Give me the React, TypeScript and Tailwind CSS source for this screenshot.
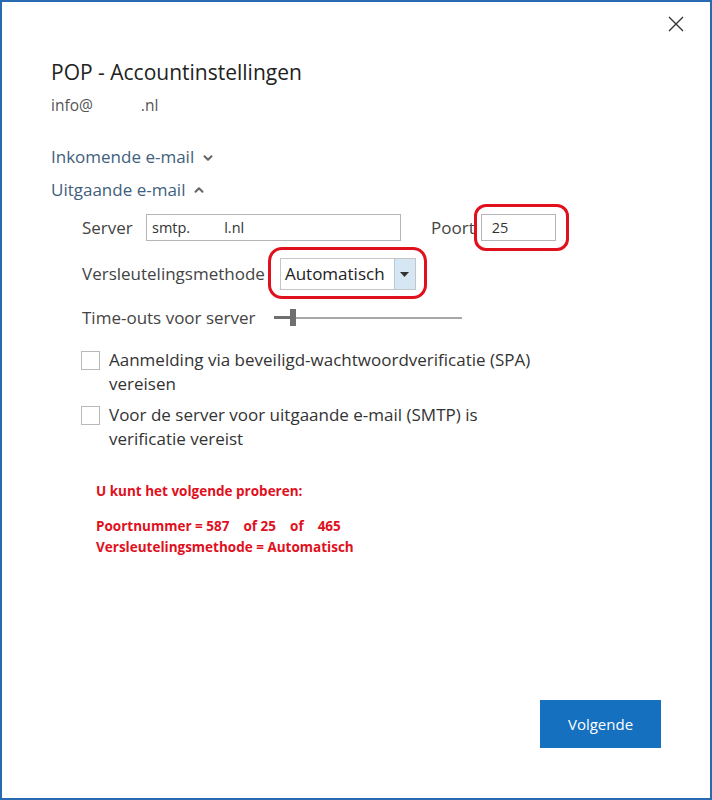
import { ChevronDown, ChevronUp } from "lucide-react";

const font = { fontFamily: '"Segoe UI", "Open Sans", "Noto Sans", sans-serif' };

function Checkbox({ lines }: { lines: string[] }) {
  return (
    <div className="flex items-start gap-[9px]">
      <div className="mt-[3px] h-[19px] w-[19px] shrink-0 border border-[#b9b9b9] bg-white" />
      <div className="text-[17px] leading-[24px] text-[#333]">
        {lines.map((l) => (
          <div key={l}>{l}</div>
        ))}
      </div>
    </div>
  );
}

export default function App() {
  return (
    <div
      style={font}
      className="relative flex h-[800px] w-[712px] flex-col border-2 border-[#2a6ab1] bg-white"
    >
      {/* close */}
      <div className="flex justify-end pr-[26px] pt-[14px]">
        <svg width="16" height="16" viewBox="0 0 16 16" stroke="#333" strokeWidth="1.4">
          <path d="M1 1 L15 15 M15 1 L1 15" />
        </svg>
      </div>

      <div className="pl-[49px] pt-[26px]">
        <h1 className="text-[21px] leading-[28px] text-[#222]">POP - Accountinstellingen</h1>
        <div className="mt-[9px] text-[15.5px] leading-[20px] text-[#555]">
          info@<span className="inline-block w-[48px]" />.nl
        </div>

        <div className="mt-[31px] flex items-center gap-[7px] text-[17px] leading-[22px] text-[#41607c]">
          Inkomende e-mail
          <ChevronDown size={14} strokeWidth={3.5} className="mt-[2px] text-[#666]" />
        </div>
        <div className="mt-[11px] flex items-center gap-[7px] text-[17px] leading-[22px] text-[#41607c]">
          Uitgaande e-mail
          <ChevronUp size={14} strokeWidth={3.5} className="text-[#666]" />
        </div>

        <div className="pl-[31px] text-[#444]">
          {/* server row */}
          <div className="mt-[13px] flex items-center">
            <span className="w-[64px] text-[17px]">Server</span>
            <div className="flex h-[27px] w-[255px] items-center border border-[#b5b5b5] px-[5px] text-[14.5px] text-[#333]">
              smtp.<span className="inline-block w-[34px]" />l.nl
            </div>
            <span className="ml-[30px] text-[17px]">Poort</span>
            <div className="relative ml-[6px]">
              <div className="flex h-[27px] w-[75px] items-center border border-[#b5b5b5] px-[10px] text-[14.5px] text-[#333]">
                25
              </div>
              <div className="absolute left-[-7px] top-[-10px] h-[47px] w-[95px] rounded-[12px] border-[3px] border-[#e0101d]" />
            </div>
          </div>

          {/* encryption row */}
          <div className="mt-[17px] flex items-center">
            <span className="text-[17px]">Versleutelingsmethode</span>
            <div className="relative ml-[15px]">
              <div className="flex h-[32px] w-[136px] items-stretch border border-[#c5c5c5] bg-white">
                <div className="flex flex-1 items-center pl-[4px] text-[17px] text-[#222]">Automatisch</div>
                <div className="flex w-[21px] items-center justify-center border-l border-[#b0cbe3] bg-[#d7e6f3]">
                  <svg width="9" height="5" viewBox="0 0 9 5">
                    <path d="M0 0 H9 L4.5 5 Z" fill="#333" />
                  </svg>
                </div>
              </div>
              <div className="absolute left-[-12px] top-[-11px] h-[52px] w-[159px] rounded-[14px] border-[3px] border-[#e0101d]" />
            </div>
          </div>

          {/* slider */}
          <div className="mt-[16px] flex h-[23px] items-center">
            <span className="text-[17px]">Time-outs voor server</span>
            <div className="relative ml-[18px] flex h-[17px] w-[188px] items-center">
              <div className="h-[3px] w-[16px] bg-[#6f6f6f]" />
              <div className="h-[17px] w-[6px] bg-[#6f6f6f]" />
              <div className="h-[2px] flex-1 bg-[#a8a8a8]" />
            </div>
          </div>

          <div className="mt-[19px] ml-[-1px] flex flex-col gap-[7px]">
            <Checkbox lines={["Aanmelding via beveiligd-wachtwoordverificatie (SPA)", "vereisen"]} />
            <Checkbox lines={["Voor de server voor uitgaande e-mail (SMTP) is", "verificatie vereist"]} />
          </div>

          <div
            style={{ fontFamily: '"Open Sans", "Noto Sans", sans-serif' }}
            className="mt-[30px] pl-[14px] text-[13.5px] font-bold leading-[21px] text-[#e0101d]"
          >
            <div>U kunt het volgende proberen:</div>
            <div className="mt-[14px] whitespace-pre">Poortnummer = 587    of 25    of    465</div>
            <div>Versleutelingsmethode = Automatisch</div>
          </div>
        </div>
      </div>

      <div className="mt-auto flex justify-end pb-[50px] pr-[49px]">
        <button className="h-[48px] w-[121px] bg-[#1570c0] text-[15px] text-white">Volgende</button>
      </div>
    </div>
  );
}
